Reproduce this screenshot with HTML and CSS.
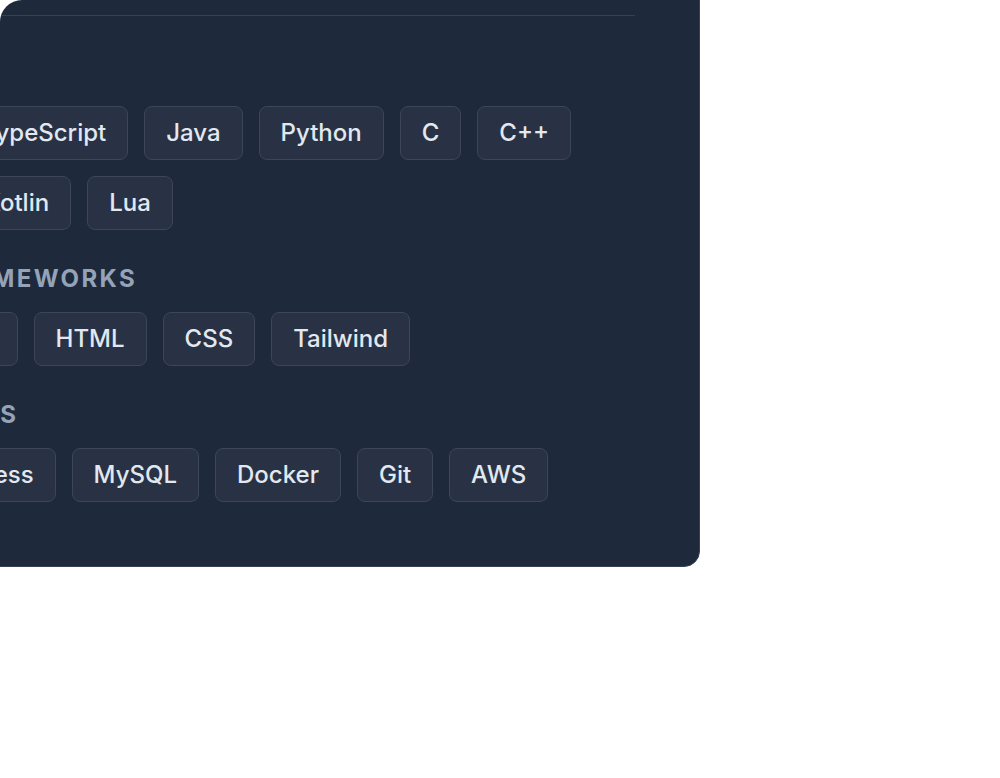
FILE: index.html
```html
<!DOCTYPE html>
<html lang="en">
<head>
<meta charset="utf-8">
<title>Skills</title>
<link rel="stylesheet" href="styles.css">
</head>
<body>
<div class="frame">
  <section class="card">
    <header class="card-header">
      <h2 class="card-title">Skills</h2>
    </header>
    <div class="groups">
      <div class="group">
        <h3 class="group-title">Languages</h3>
        <ul class="chips">
          <li class="chip">JavaScript</li>
          <li class="chip">TypeScript</li>
          <li class="chip">Java</li>
          <li class="chip">Python</li>
          <li class="chip">C</li>
          <li class="chip">C++</li>
          <li class="chip">Go</li>
          <li class="chip">C#</li>
          <li class="chip">Kotlin</li>
          <li class="chip">Lua</li>
        </ul>
      </div>
      <div class="group">
        <h3 class="group-title">Frontend Frameworks</h3>
        <ul class="chips">
          <li class="chip">React</li>
          <li class="chip">Svelte</li>
          <li class="chip">HTML</li>
          <li class="chip">CSS</li>
          <li class="chip">Tailwind</li>
        </ul>
      </div>
      <div class="group">
        <h3 class="group-title">DevOps &amp; Tools</h3>
        <ul class="chips">
          <li class="chip">Heroku</li>
          <li class="chip">Express</li>
          <li class="chip">MySQL</li>
          <li class="chip">Docker</li>
          <li class="chip">Git</li>
          <li class="chip">AWS</li>
        </ul>
      </div>
    </div>
  </section>
</div>
</body>
</html>
```
FILE: styles.css
```css
* { box-sizing: border-box; }

html, body {
  margin: 0;
  padding: 0;
  background: #ffffff;
}

body {
  font-family: Inter, "Noto Sans", "DejaVu Sans", sans-serif;
}

.frame {
  width: 1000px;
  height: 778px;
  overflow: hidden;
  border-top-left-radius: 22px;
  background: #ffffff;
}

.card {
  width: 988px;
  margin-left: -288px;
  margin-top: -110px;
  padding: 64px;
  background: #1e293b;
  border: 1px solid #334155;
  border-radius: 16px;
}

.card-header {
  padding-bottom: 24px;
  border-bottom: 1px solid #334155;
}

.card-title {
  margin: 0;
  font-size: 28px;
  line-height: 36px;
  color: #f1f5f9;
}

.groups {
  padding-top: 43px;
  display: flex;
  flex-direction: column;
  gap: 35px;
}

.group-title {
  margin: 0 0 19px;
  font-size: 24px;
  line-height: 28px;
  font-weight: 700;
  letter-spacing: 2.4px;
  text-transform: uppercase;
  color: #94a3b8;
}

.chips {
  list-style: none;
  margin: 0;
  padding: 0;
  display: flex;
  flex-wrap: wrap;
  gap: 16px;
}

.chip {
  padding: 12px 21px;
  font-size: 24px;
  font-weight: 500;
  line-height: 28px;
  color: #e2e8f0;
  background: #283244;
  border: 1px solid #3b4658;
  border-radius: 8px;
}
```
